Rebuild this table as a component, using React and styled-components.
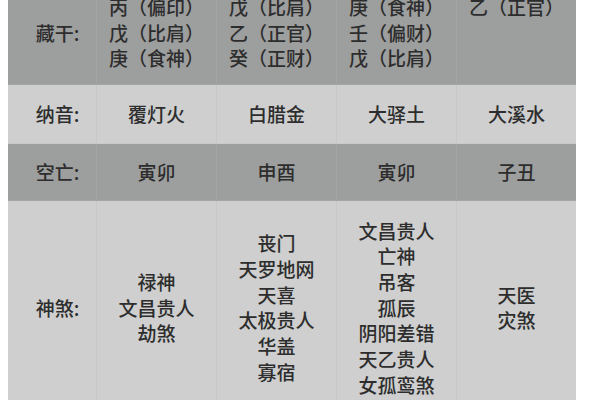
import React from 'react'
import styled, { createGlobalStyle } from 'styled-components';

const GlobalStyle = createGlobalStyle`
    html, body {
        margin: 0;
        padding: 0;
        background: #ffffff;
        overflow: hidden;
    }
`;

const rows = [
    {
        label: '藏干:',
        tone: 'dark',
        pad: 13,
        cells: [
            ['丙（偏印）', '戊（比肩）', '庚（食神）'],
            ['戊（比肩）', '乙（正官）', '癸（正财）'],
            ['庚（食神）', '壬（偏财）', '戊（比肩）'],
            ['乙（正官）'],
        ],
        topLast: true,
    },
    { label: '纳音:', tone: 'light', pad: 16, cells: [['覆灯火'], ['白腊金'], ['大驿土'], ['大溪水']] },
    { label: '空亡:', tone: 'dark', pad: 15, cells: [['寅卯'], ['申酉'], ['寅卯'], ['子丑']] },
    {
        label: '神煞:',
        tone: 'light',
        pad: 17,
        cells: [
            ['禄神', '文昌贵人', '劫煞'],
            ['丧门', '天罗地网', '天喜', '太极贵人', '华盖', '寡宿'],
            ['文昌贵人', '亡神', '吊客', '孤辰', '阴阳差错', '天乙贵人', '女孤鸾煞'],
            ['天医', '灾煞'],
        ],
    },
];

const App = () => {
  return (
    <>
      <GlobalStyle />
      <Wrapper>
        <Table>
            {rows.map((row) => (
                <Row key={row.label} $tone={row.tone}>
                    <Label $pad={row.pad}>{row.label}</Label>
                    {row.cells.map((lines, i) => (
                        <Cell
                            key={i}
                            $pad={row.pad}
                            $top={row.topLast && i === row.cells.length - 1}
                        >
                            {lines.map((t, j) => (
                                <Line key={j}>{t}</Line>
                            ))}
                        </Cell>
                    ))}
                </Row>
            ))}
        </Table>
      </Wrapper>
    </>
  )
};

const Wrapper = styled.section`
    width: 600px;
    height: 400px;
    padding: 0 0 0 8px;
    box-sizing: border-box;
    overflow: hidden;
    font-family: "Noto Sans CJK SC", "Noto Sans", sans-serif;
`;

const Table = styled.div`
    width: 568px;
    margin-top: -19px;
    display: flex;
    flex-direction: column;
`;

const Row = styled.div`
    display: grid;
    grid-template-columns: 88px repeat(4, 120px);
    background: ${({ $tone }) => ($tone === 'dark' ? '#9d9e9e' : '#cecfce')};
    border-bottom: 1px solid ${({ $tone }) => ($tone === 'dark' ? '#a3a4a4' : '#c8c9c8')};
`;

const Cell = styled.div`
    display: flex;
    flex-direction: column;
    align-items: center;
    justify-content: ${({ $top }) => ($top ? 'flex-start' : 'center')};
    padding: ${({ $pad }) => $pad}px 0;
    border-left: 1px solid rgba(182, 183, 183, 0.28);
    color: #2d2d2d;
    font-size: 19px;
    font-weight: 500;
    line-height: 25.7px;
`;

const Label = styled(Cell)`
    border-left: none;
    padding-left: 11px;
`;

const Line = styled.span`
    white-space: nowrap;
`;

export default App
